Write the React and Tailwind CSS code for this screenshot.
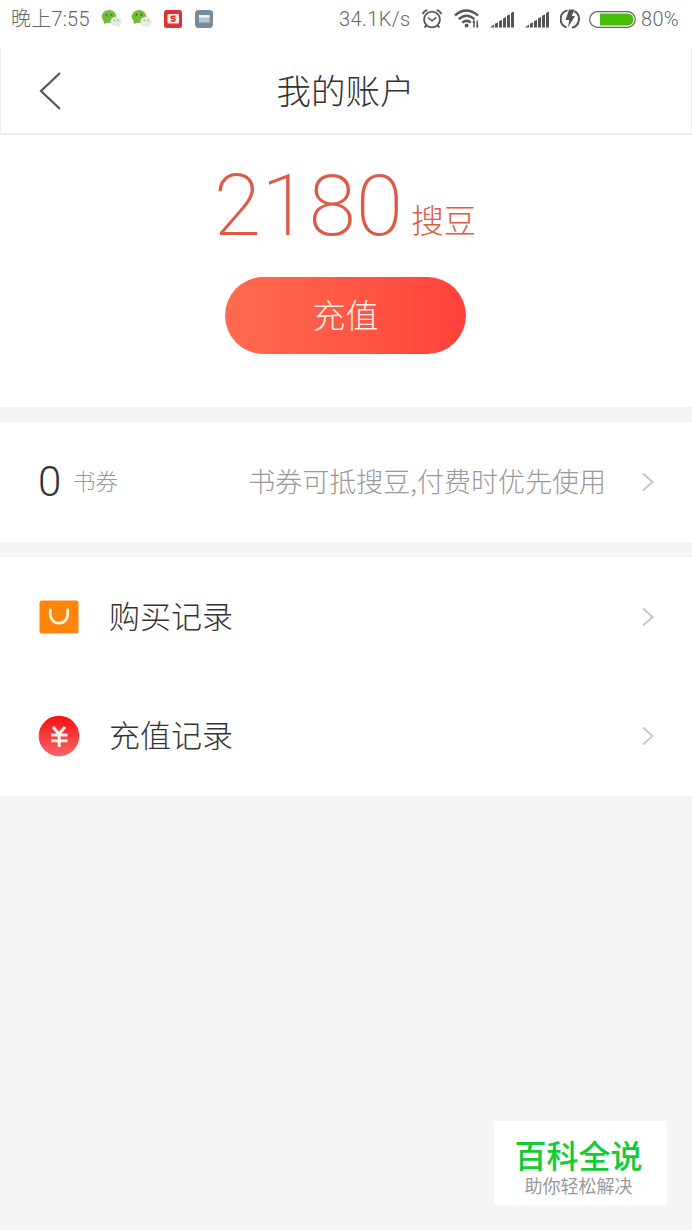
import React from "react";

const WeChatIcon = () => (
  <svg className="h-5 w-[22px]" viewBox="0 0 22 20">
    <path d="M2.500 11.500L3 15l3.500-1.500z" fill="#72bd38" />
    <ellipse cx="8" cy="7.500" rx="7.300" ry="6.500" fill="#72bd38" />
    <circle cx="5.500" cy="5.800" r="0.900" fill="#35631b" />
    <circle cx="10.300" cy="5.800" r="0.900" fill="#35631b" />
    <path d="M18 16l1.200 2.200-3.500-.9z" fill="#e3e9e0" />
    <ellipse cx="15" cy="12.600" rx="5.600" ry="4.800" fill="#e6ebe3" />
    <circle cx="13.200" cy="11.300" r="0.700" fill="#77806f" />
    <circle cx="17" cy="11.300" r="0.700" fill="#77806f" />
  </svg>
);

const ReaderIcon = () => (
  <svg className="h-[18px] w-[18px]" viewBox="0 0 18 18">
    <rect width="18" height="18" rx="2.500" fill="#db3434" />
    <rect x="3.500" y="4" width="11.500" height="9.500" rx="1" fill="#f9e8e5" />
    <path d="M11.600 6.300H8.500c-1.600 0-1.600 2.200 0 2.200h1.300c1.600 0 1.600 2.300 0 2.300H6.800" fill="none" stroke="#d93636" strokeWidth="1.700" />
  </svg>
);

const NoteIcon = () => (
  <svg className="h-[18px] w-[18px]" viewBox="0 0 18 18">
    <rect width="18" height="18" rx="3.500" fill="#758c9b" />
    <rect x="4" y="5" width="10.500" height="7.500" fill="#b8c6cf" />
    <rect x="4" y="5" width="10.500" height="2.500" fill="#eef2f4" />
  </svg>
);

const AlarmIcon = () => (
  <svg className="h-[22px] w-[22px]" viewBox="0 0 22 22" fill="none" stroke="#5a5a5a">
    <circle cx="11" cy="11.500" r="7.900" strokeWidth="1.900" />
    <path d="M7 9.500l4 3.300 4.200-3.300" strokeWidth="1.600" />
    <path d="M1.500 6Q3 3 6.300 1.800M15.700 1.800Q19 3 20.500 6M5.500 17.500l-2 2M16.500 17.500l2 2" strokeWidth="1.900" />
  </svg>
);

const WifiIcon = () => (
  <svg className="h-5 w-[26px]" viewBox="0 0 26 20" fill="none" stroke="#555">
    <path d="M1 6.500q11-9.800 23 0M4.700 10.200q8-7 15.700 0M8.400 13.700q4.200-3.800 8.400 0" strokeWidth="2.400" />
    <circle cx="12.600" cy="16.500" r="1.900" fill="#555" stroke="none" />
    <path d="M20 11.500v7M23.200 11.500v7" strokeWidth="1.500" />
    <path d="M18.200 13.800l1.800-3 .7 3zM22.500 16.300h2.300l-1.600 3z" fill="#555" stroke="none" />
  </svg>
);

const SignalIcon = () => (
  <svg className="h-[17px] w-6" viewBox="0 0 24 17" fill="#555">
    <path d="M0 16.500l4-3v3zM4.900 12.800l3-1.500v5.200h-3zM9 10.200l3-1.500v7.800H9zM13 7.500l3-1.500v10.500h-3zM17 4.800l3-1.500v13.200h-3zM21 2l3-1.500v16h-3z" />
  </svg>
);

const ChargeIcon = () => (
  <svg className="h-5 w-5" viewBox="0 0 20 20" fill="none" stroke="#555">
    <path d="M7.500 1.400a8.900 8.900 0 0 0-1 17M14.300 2.200a8.900 8.900 0 0 1-2.300 16.500" strokeWidth="2" />
    <path d="M9 .5h5.500L11.800 7H15L8 18.500l1.300-7.500H5.500z" fill="#555" stroke="none" />
  </svg>
);

const BatteryIcon = () => (
  <svg className="h-[17px] w-[47px]" viewBox="0 0 47 17">
    <rect x="0.700" y="0.700" width="45.600" height="15.600" rx="7.800" fill="#fff" stroke="#666" strokeWidth="1.200" />
    <path d="M11 2.500h27.500a6 6 0 0 1 0 12H11z" fill="#46be08" />
  </svg>
);

const StatusBar = () => (
  <div className="flex h-12 items-start font-[Roboto,'Noto_Sans_CJK_SC',sans-serif] text-[#666]">
    <div className="flex h-[38px] flex-1 items-center pl-[11px]">
      <span className="w-[90px] whitespace-nowrap text-[20px] tracking-[0.2px]">晚上7:55</span>
      <WeChatIcon />
      <span className="w-2" />
      <WeChatIcon />
      <span className="w-[11px]" />
      <ReaderIcon />
      <span className="w-[13px]" />
      <NoteIcon />
    </div>
    <div className="flex h-[38px] w-[353px] shrink-0 items-center">
      <span className="w-[82px] whitespace-nowrap text-[20px] tracking-[0.4px]">34.1K/s</span>
      <AlarmIcon />
      <span className="w-[11px]" />
      <WifiIcon />
      <span className="w-[10px]" />
      <SignalIcon />
      <span className="w-[11px]" />
      <SignalIcon />
      <span className="w-[11px]" />
      <ChargeIcon />
      <span className="w-[9px]" />
      <BatteryIcon />
      <span className="ml-[5px] whitespace-nowrap text-[20px] tracking-[0.3px]">80%</span>
    </div>
  </div>
);

const Chevron = () => (
  <svg className="h-5 w-3 shrink-0" viewBox="0 0 12 20" fill="none" stroke="#c7c7c7" strokeWidth="1.900">
    <path d="M1 1.500l9.500 8.500L1 18.500" />
  </svg>
);

const BagIcon = () => (
  <svg className="h-[34px] w-10" viewBox="0 0 40 34">
    <rect x="0.500" y="0.500" width="39" height="33" rx="2" fill="#ff860b" />
    <path d="M11.300 10v4.500a8.700 8.700 0 0 0 17.400 0V10" fill="none" stroke="#fff4df" strokeWidth="2.800" strokeLinecap="round" />
  </svg>
);

const YuanIcon = () => (
  <svg className="h-[42px] w-[42px]" viewBox="0 0 42 42">
    <defs>
      <linearGradient id="yuan" x1="0" y1="0" x2="0" y2="1">
        <stop offset="0" stopColor="#f60f12" />
        <stop offset="1" stopColor="#fa6668" />
      </linearGradient>
    </defs>
    <circle cx="21" cy="21" r="20.300" fill="url(#yuan)" />
    <path d="M15 12l6 7 6-7M13 20h16.500M13 25.800h16.500M21.200 19v13" fill="none" stroke="#fff2ed" strokeWidth="3" />
  </svg>
);

const records = [
  { title: "购买记录", icon: <BagIcon /> },
  { title: "充值记录", icon: <YuanIcon /> },
];

const App = () => {
  return (
    <div className="flex h-[1230px] w-[692px] flex-col overflow-hidden bg-[#f5f5f5] font-['Noto_Sans_CJK_SC',sans-serif] font-light">
      <div className="bg-white">
        <StatusBar />
      </div>

      {/* Header */}
      <header className="grid h-[87px] grid-cols-[100px_1fr_100px] items-center border-x border-b-2 border-[#ececec] bg-white">
        <button className="pl-[38px]" aria-label="返回">
          <svg className="h-10 w-6" viewBox="0 0 24 40" fill="none" stroke="#555" strokeWidth="2.200">
            <path d="M21 2L2 20l19 18" />
          </svg>
        </button>
        <h1 className="pr-px pb-[3px] text-center text-[34.500px] leading-none text-[#333]">我的账户</h1>
      </header>

      {/* Balance */}
      <section className="flex h-[272px] flex-col items-center bg-white">
        <div className="flex h-[142px] items-baseline pt-[21px] pr-[2px] text-[#df5947]">
          <span className="font-[Roboto] text-[86px] leading-[100px] font-extralight">2180</span>
          <span className="relative top-[-2px] ml-[8px] text-[32.500px] leading-none">搜豆</span>
        </div>
        <button className="mr-px h-[77px] w-[241px] rounded-full bg-linear-to-r from-[#ff6b4f] to-[#ff413b] pb-[3px] text-[33px] leading-none text-[#fff0e8]">
          充值
        </button>
      </section>

      {/* Coupons */}
      <section className="mt-[15px] flex h-[120px] items-center bg-white pr-[38px] pl-[38px]">
        <span className="w-[35px] font-[Roboto] text-[42px] leading-none text-[#333]">0</span>
        <span className="pb-[3px] text-[22.500px] leading-none text-[#999]">书券</span>
        <span className="mr-[36px] ml-auto pb-[3px] text-[27px] leading-none text-[#999]">书券可抵搜豆,付费时优先使用</span>
        <Chevron />
      </section>

      {/* Records */}
      <section className="mt-[15px] h-[239px] bg-white">
        {records.map((item) => (
          <div key={item.title} className="flex h-[119px] items-center pr-[38px] pl-[38px]">
            <span className="flex w-[42px] justify-center">{item.icon}</span>
            <span className="ml-[29px] flex-1 pb-[4px] text-[31px] leading-none text-[#333]">{item.title}</span>
            <Chevron />
          </div>
        ))}
      </section>

      {/* Brand card */}
      <aside className="mt-auto mr-[25px] mb-[25px] flex h-[84px] w-[173px] flex-col items-center self-end bg-white pt-[17px] pr-[4px]">
        <span className="text-[32px] leading-[32px] font-medium text-[#12cc36]">百科全说</span>
        <span className="mt-[6px] text-[18px] leading-[18px] font-normal text-[#999]">助你轻松解决</span>
      </aside>
    </div>
  );
};

export default App;
